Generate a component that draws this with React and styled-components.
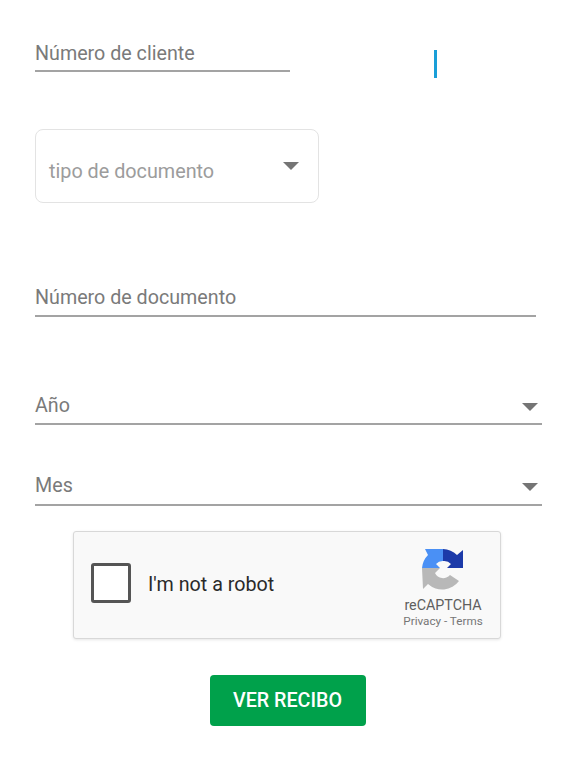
import React from 'react';
import styled, { createGlobalStyle } from 'styled-components';

const GlobalStyle = createGlobalStyle`
    html, body {
        margin: 0;
        background: #fff;
        font-family: Roboto, "Liberation Sans", sans-serif;
    }
`;

const Page = styled.form`
    width: 579px;
    height: 761px;
    padding: 40px 0 0 35px;
    box-sizing: border-box;
    overflow: hidden;
`;

const TopRow = styled.div`
    display: flex;
    align-items: flex-start;
`;

const Cursor = styled.div`
    width: 3px;
    height: 28px;
    margin: 10px 0 0 144px;
    background: #1a9fd8;
`;

const Field = styled.div`
    width: ${props => props.$width}px;
    height: ${props => props.$height || 32}px;
    margin-top: ${props => props.$top || 0}px;
    padding-bottom: ${props => props.$bottom || 3}px;
    display: flex;
    align-items: center;
    justify-content: space-between;
    box-sizing: border-box;
    border-bottom: 2px solid #a3a3a3;
    color: #7a7a7a;
    font-size: 19.7px;
    line-height: 26px;
`;

const Arrow = styled.span`
    width: 0;
    height: 0;
    margin-top: 2px;
    margin-right: 4px;
    border-left: 8px solid transparent;
    border-right: 8px solid transparent;
    border-top: 8px solid #757575;
`;

const SelectBox = styled.div`
    width: 284px;
    height: 74px;
    margin-top: 51px;
    padding: 17px 19px 0 13px;
    display: flex;
    align-items: flex-start;
    justify-content: space-between;
    box-sizing: border-box;
    border: 1px solid #e3e3e3;
    border-radius: 8px;
    color: #9c9c9c;
    font-size: 19.8px;
    line-height: 50px;
`;

const BoxArrow = styled(Arrow)`
    margin: 15px 0 0;
`;

const Captcha = styled.div`
    width: 428px;
    height: 108px;
    margin: 25px 0 0 38px;
    display: flex;
    box-sizing: border-box;
    background: #f9f9f9;
    border: 1px solid #d8d8d8;
    border-radius: 3px;
    box-shadow: 0 1px 3px rgba(0, 0, 0, 0.1);
`;

const CheckBox = styled.div`
    width: 40px;
    height: 40px;
    margin: 31px 0 0 17px;
    box-sizing: border-box;
    background: #fff;
    border: 3px solid #555;
    border-radius: 3px;
`;

const CaptchaLabel = styled.div`
    flex: 1;
    margin: 40px 0 0 17px;
    color: #2a2a2a;
    font-size: 19.7px;
    line-height: 26px;
`;

const Brand = styled.div`
    width: 82px;
    margin: 16px 16px 0 0;
    display: flex;
    flex-direction: column;
    align-items: center;
`;

const BrandName = styled.div`
    margin-top: 5px;
    color: #5f5f5f;
    font-size: 14.3px;
    line-height: 17px;
    white-space: nowrap;
`;

const BrandLinks = styled.div`
    color: #767676;
    font-size: 11.7px;
    line-height: 15px;
    white-space: nowrap;
`;

const SubmitRow = styled.div`
    width: 505px;
    margin-top: 36px;
    display: flex;
    justify-content: center;
`;

const SubmitButton = styled.button`
    width: 156px;
    height: 51px;
    padding: 0;
    border: 0;
    border-radius: 4px;
    background: #00a14b;
    color: #fff;
    font-family: inherit;
    font-size: 19.7px;
    font-weight: 500;
`;

function RecaptchaLogo() {
    return (
        <svg width="44" height="44" viewBox="0 0 44 44">
            <path fill="#4a90f5" d="M1 20 A21 21 0 0 1 7 7 L4 1 L22 1 L22 13 A9 9 0 0 0 15 16 L19 20 Z" />
            <path fill="#1c3aa9" d="M22 1 A21 21 0 0 1 36 7 L42 2 L42 20 L26 20 L30 16 A9 9 0 0 0 22 13 Z" />
            <path fill="#b8b8b8" d="M1 20 L19 20 L14 25 A9 9 0 0 0 29 27 L38 33 A21 21 0 0 1 7 36 L2 41 Z" />
        </svg>
    );
}

export default function App() {
    return (
        <Page>
            <GlobalStyle />
            <TopRow>
                <Field $width={255}>Número de cliente</Field>
                <Cursor />
            </TopRow>
            <SelectBox>
                tipo de documento
                <BoxArrow />
            </SelectBox>
            <Field $width={501} $top={80} $height={34}>Número de documento</Field>
            <Field $width={507} $top={76} $bottom={5}>
                Año
                <Arrow />
            </Field>
            <Field $width={507} $top={49} $bottom={6}>
                Mes
                <Arrow />
            </Field>
            <Captcha>
                <CheckBox />
                <CaptchaLabel>I'm not a robot</CaptchaLabel>
                <Brand>
                    <RecaptchaLogo />
                    <BrandName>reCAPTCHA</BrandName>
                    <BrandLinks>Privacy - Terms</BrandLinks>
                </Brand>
            </Captcha>
            <SubmitRow>
                <SubmitButton type="button">VER RECIBO</SubmitButton>
            </SubmitRow>
        </Page>
    );
}
